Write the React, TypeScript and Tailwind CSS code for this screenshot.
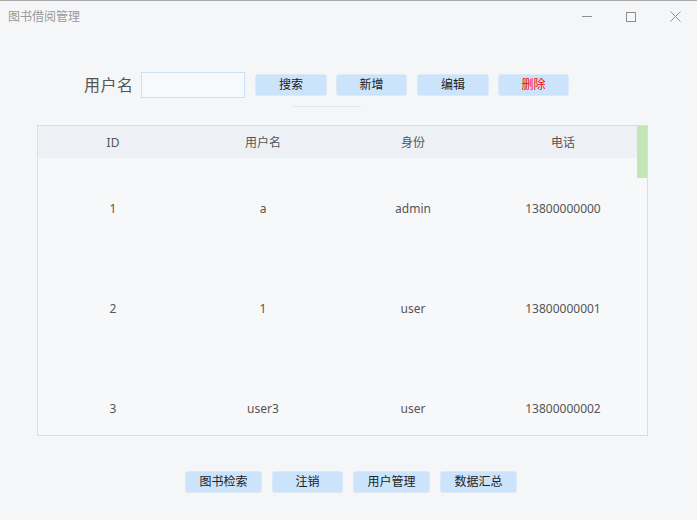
import React from "react";

const font = { fontFamily: '"Noto Sans", "Noto Sans CJK SC", sans-serif' };

function Btn({ children, w, red }: { children: React.ReactNode; w: string; red?: boolean }) {
  return (
    <div
      className={`${w} h-[22px] flex items-center justify-center rounded-[3px] border border-[#dde9f6] bg-[#cbe3fb] text-[12px] leading-none ${
        red ? "text-[#ff0000]" : "text-[#222222]"
      }`}
    >
      {children}
    </div>
  );
}

const rows = [
  ["1", "a", "admin", "13800000000"],
  ["2", "1", "user", "13800000001"],
  ["3", "user3", "user", "13800000002"],
];

export default function App() {
  return (
    <div
      className="w-[697px] h-[520px] bg-[#f5f6f8] border-t border-[#a9a9a9] flex flex-col overflow-hidden"
      style={font}
    >
      {/* title bar */}
      <div className="h-[31px] flex items-center justify-between pl-[8px] pr-[16px]">
        <span className="text-[12px] text-[#9a9a9a]">图书借阅管理</span>
        <div className="flex items-center gap-[34px]">
          <svg width="10" height="10" viewBox="0 0 10 10">
            <line x1="0" y1="4.5" x2="10" y2="4.5" stroke="#8f8f8f" strokeWidth="1" />
          </svg>
          <svg width="10" height="10" viewBox="0 0 10 10">
            <rect x="0.5" y="0.5" width="9" height="9" fill="none" stroke="#8f8f8f" strokeWidth="1" />
          </svg>
          <svg width="11" height="11" viewBox="0 0 11 11">
            <line x1="0.5" y1="0.5" x2="10.5" y2="10.5" stroke="#8f8f8f" strokeWidth="1" />
            <line x1="10.5" y1="0.5" x2="0.5" y2="10.5" stroke="#8f8f8f" strokeWidth="1" />
          </svg>
        </div>
      </div>

      {/* toolbar */}
      <div className="mt-[40px] h-[26px] flex items-center pl-[84px]">
        <span className="shrink-0 whitespace-nowrap text-[16px] text-[#555555] w-[49px] leading-none tracking-[0.5px]">
          用户名
        </span>
        <div className="shrink-0 ml-[8px] w-[104px] h-[26px] border border-[#c9e0f6] bg-[#f8f9fb]" />
        <div className="ml-[10px] flex items-center">
          <Btn w="w-[72px]">搜索</Btn>
          <div className="w-[9px]" />
          <Btn w="w-[71px]">新增</Btn>
          <div className="w-[10px]" />
          <Btn w="w-[72px]">编辑</Btn>
          <div className="w-[9px]" />
          <Btn w="w-[71px]" red>
            删除
          </Btn>
        </div>
      </div>

      <div className="mt-[8px] ml-[293px] w-[68px] h-px bg-[#e3e6ea]" />

      {/* table */}
      <div className="mt-[18px] ml-[37px] w-[611px] h-[311px] border border-[#cfe1f6] bg-[#f7f8fa] relative overflow-hidden">
        <div className="h-[32px] pt-[2px] bg-[#edf0f4] flex items-center text-[12px] text-[#555555]">
          {["ID", "用户名", "身份", "电话"].map((h) => (
            <div key={h} className="w-[150px] text-center">
              {h}
            </div>
          ))}
        </div>
        {rows.map((r) => (
          <div key={r[0]} className="h-[100px] pt-[2px] flex items-center text-[12px] text-[#555555]">
            {r.map((c, i) => (
              <div key={i} className="w-[150px] text-center">
                {c}
              </div>
            ))}
          </div>
        ))}
        <div className="absolute right-0 top-0 w-[10px] h-[52px] bg-[#c3e6b8]" />
      </div>

      {/* bottom buttons */}
      <div className="mt-[35px] flex items-center pl-[185px] gap-[10px]">
        <Btn w="w-[77px]">图书检索</Btn>
        <Btn w="w-[71px]">注销</Btn>
        <Btn w="w-[77px]">用户管理</Btn>
        <Btn w="w-[77px]">数据汇总</Btn>
      </div>
    </div>
  );
}
